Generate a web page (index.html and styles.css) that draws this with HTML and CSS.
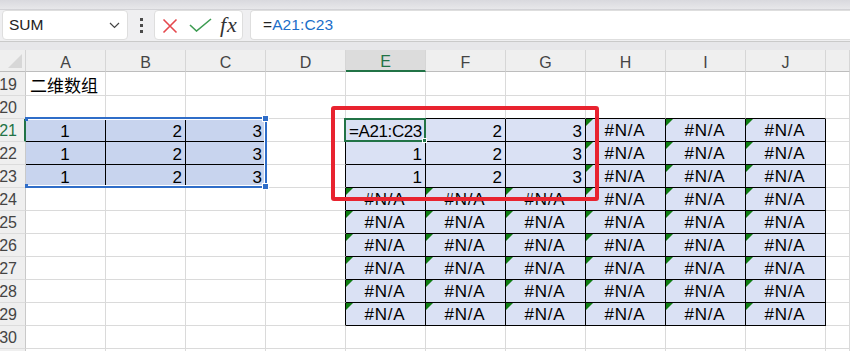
FILE: index.html
```html
<!DOCTYPE html>
<html lang="zh-CN">
<head>
<meta charset="utf-8">
<title>Sheet</title>
<link rel="stylesheet" href="styles.css">
</head>
<body>
<div class="app">
  <div class="topstrip"></div>
  <div class="fbar">
    <div class="namebox">
      <span class="name">SUM</span>
      <svg class="chev" width="11" height="7" viewBox="0 0 11 7"><polyline points="1,1 5.5,5.5 10,1" fill="none" stroke="#444" stroke-width="1.2"/></svg>
    </div>
    <div class="dots"><i></i><i></i><i></i></div>
    <div class="btns">
      <svg class="ico-x" width="16" height="16" viewBox="0 0 16 16"><path d="M1.5 1.5 L14.5 14.5 M14.5 1.5 L1.5 14.5" stroke="#e5484d" stroke-width="1.6" fill="none"/></svg>
      <svg class="ico-ok" width="23" height="14" viewBox="0 0 23 14"><polyline points="1,7 7.5,13 22,1" fill="none" stroke="#3d9c52" stroke-width="1.6"/></svg>
      <span class="fx">fx</span>
    </div>
    <div class="finput"><span class="eq">=</span><span class="ref">A21:C23</span></div>
  </div>
  <div class="gapbar"></div>
  <div class="sheet">
    <!-- header -->
    <div class="corner"><span class="tri"></span></div>
    <div class="ch">A</div><div class="ch">B</div><div class="ch">C</div><div class="ch">D</div>
    <div class="ch act">E</div><div class="ch">F</div><div class="ch">G</div><div class="ch">H</div>
    <div class="ch">I</div><div class="ch">J</div><div class="ch"></div>
    <!-- 19 -->
    <div class="rh">19</div>
    <div class="c l cjk">二维数组</div><div class="c"></div><div class="c"></div><div class="c"></div>
    <div class="c"></div><div class="c"></div><div class="c"></div><div class="c"></div><div class="c"></div><div class="c"></div><div class="c"></div>
    <!-- 20 -->
    <div class="rh">20</div>
    <div class="c"></div><div class="c"></div><div class="c"></div><div class="c"></div>
    <div class="c kb"></div><div class="c kb"></div><div class="c kb"></div><div class="c kb"></div><div class="c kb"></div><div class="c kb"></div><div class="c"></div>
    <!-- 21 -->
    <div class="rh cur">21</div>
    <div class="c s m">1</div><div class="c s r">2</div><div class="c s r">3</div><div class="c kr"></div>
    <div class="c k l f">=A21:C23</div><div class="c k r">2</div><div class="c k r">3</div><div class="c k na">#N/A</div><div class="c k na">#N/A</div><div class="c k na">#N/A</div><div class="c"></div>
    <!-- 22 -->
    <div class="rh">22</div>
    <div class="c s m">1</div><div class="c s r">2</div><div class="c s r">3</div><div class="c kr"></div>
    <div class="c k r">1</div><div class="c k r">2</div><div class="c k r">3</div><div class="c k na">#N/A</div><div class="c k na">#N/A</div><div class="c k na">#N/A</div><div class="c"></div>
    <!-- 23 -->
    <div class="rh">23</div>
    <div class="c s m">1</div><div class="c s r">2</div><div class="c s r">3</div><div class="c kr"></div>
    <div class="c k r">1</div><div class="c k r">2</div><div class="c k r">3</div><div class="c k na">#N/A</div><div class="c k na">#N/A</div><div class="c k na">#N/A</div><div class="c"></div>
    <!-- 24 -->
    <div class="rh">24</div>
    <div class="c"></div><div class="c"></div><div class="c"></div><div class="c kr"></div>
    <div class="c k na">#N/A</div><div class="c k na">#N/A</div><div class="c k na">#N/A</div><div class="c k na">#N/A</div><div class="c k na">#N/A</div><div class="c k na">#N/A</div><div class="c"></div>
    <!-- 25 -->
    <div class="rh">25</div>
    <div class="c"></div><div class="c"></div><div class="c"></div><div class="c kr"></div>
    <div class="c k na">#N/A</div><div class="c k na">#N/A</div><div class="c k na">#N/A</div><div class="c k na">#N/A</div><div class="c k na">#N/A</div><div class="c k na">#N/A</div><div class="c"></div>
    <!-- 26 -->
    <div class="rh">26</div>
    <div class="c"></div><div class="c"></div><div class="c"></div><div class="c kr"></div>
    <div class="c k na">#N/A</div><div class="c k na">#N/A</div><div class="c k na">#N/A</div><div class="c k na">#N/A</div><div class="c k na">#N/A</div><div class="c k na">#N/A</div><div class="c"></div>
    <!-- 27 -->
    <div class="rh">27</div>
    <div class="c"></div><div class="c"></div><div class="c"></div><div class="c kr"></div>
    <div class="c k na">#N/A</div><div class="c k na">#N/A</div><div class="c k na">#N/A</div><div class="c k na">#N/A</div><div class="c k na">#N/A</div><div class="c k na">#N/A</div><div class="c"></div>
    <!-- 28 -->
    <div class="rh">28</div>
    <div class="c"></div><div class="c"></div><div class="c"></div><div class="c kr"></div>
    <div class="c k na">#N/A</div><div class="c k na">#N/A</div><div class="c k na">#N/A</div><div class="c k na">#N/A</div><div class="c k na">#N/A</div><div class="c k na">#N/A</div><div class="c"></div>
    <!-- 29 -->
    <div class="rh">29</div>
    <div class="c"></div><div class="c"></div><div class="c"></div><div class="c kr"></div>
    <div class="c k na">#N/A</div><div class="c k na">#N/A</div><div class="c k na">#N/A</div><div class="c k na">#N/A</div><div class="c k na">#N/A</div><div class="c k na">#N/A</div><div class="c"></div>
    <!-- 30 -->
    <div class="rh">30</div>
    <div class="c"></div><div class="c"></div><div class="c"></div><div class="c"></div>
    <div class="c"></div><div class="c"></div><div class="c"></div><div class="c"></div><div class="c"></div><div class="c"></div><div class="c"></div>
    <!-- 31 (partial) -->
    <div class="rh"></div>
    <div class="c"></div><div class="c"></div><div class="c"></div><div class="c"></div>
    <div class="c"></div><div class="c"></div><div class="c"></div><div class="c"></div><div class="c"></div><div class="c"></div><div class="c"></div>

    <!-- overlays -->
    <div class="selection">
      <span class="hd tl"></span><span class="hd tr"></span><span class="hd bl"></span><span class="hd br"></span>
    </div>
    <div class="active"><span class="fill-handle"></span></div>
    <div class="redbox"></div>
  </div>
</div>
</body>
</html>
```

FILE: styles.css
```css
* { box-sizing: border-box; }
html, body { margin: 0; padding: 0; }
body {
  width: 850px;
  height: 351px;
  overflow: hidden;
  background: #ffffff;
  font-family: "Liberation Sans", Arial, sans-serif;
  color: #000;
}
.app { width: 850px; height: 351px; overflow: hidden; }

.topstrip {
  height: 10px;
  background: linear-gradient(#d9d9de, #e7e7ea);
  border-bottom: 1px solid #d2d2d6;
}
.fbar {
  height: 32px;
  background: #efeff1;
  border-bottom: 1px solid #cacaca;
  display: flex;
  align-items: flex-start;
  padding: 0 0 0 2px;
}
.namebox {
  width: 126px;
  height: 30px;
  background: #fff;
  border: 1px solid #dedede;
  border-radius: 4px;
  display: flex;
  align-items: center;
  padding: 0 0 0 6px;
}
.name { font-size: 15.5px; color: #222; flex: 1; line-height: 1; }
.chev { margin-right: 7px; margin-top: 1px; }
.dots {
  width: 26px;
  height: 30px;
  display: flex;
  flex-direction: column;
  align-items: center;
  justify-content: center;
  gap: 3px;
}
.dots i { display: block; width: 3px; height: 3px; background: #4a4a4a; }
.btns {
  width: 89px;
  height: 30px;
  background: #fff;
  border: 1px solid #dedede;
  border-radius: 4px;
  display: flex;
  align-items: center;
  padding-left: 7px;
}
.ico-x { margin-top: 1px; }
.ico-ok { margin-left: 11px; margin-top: 0; }
.fx {
  font-family: "Liberation Serif", "Times New Roman", serif;
  font-style: italic;
  font-size: 22px;
  color: #333;
  margin-left: 8px;
  margin-top: -1px;
  letter-spacing: 1px;
}
.finput {
  flex: 1;
  height: 30px;
  margin-left: 7px;
  background: #fff;
  border: 1px solid #dedede;
  border-right: none;
  border-radius: 4px 0 0 4px;
  display: flex;
  align-items: center;
  padding-left: 12px;
  font-size: 15.5px;
  letter-spacing: 0.1px;
}
.eq { color: #222; }
.ref { color: #1b6ec9; }
.gapbar { height: 8px; background: #e7e7ea; }

.sheet {
  position: relative;
  display: grid;
  grid-template-columns: 26px repeat(10, 80px) 24px;
  grid-template-rows: 22px 24px repeat(11, 23px) 10px;
}
.corner {
  background: #efefef;
  border-right: 1px solid #d4d4d4;
  border-bottom: 1px solid #bdbdbd;
  position: relative;
}
.tri {
  position: absolute;
  right: 3px;
  bottom: 3px;
  width: 0;
  height: 0;
  border-left: 14px solid transparent;
  border-bottom: 14px solid #d7d7d7;
}
.ch {
  background: #efefef;
  border-right: 1px solid #d6d6d6;
  border-bottom: 1px solid #bdbdbd;
  display: flex;
  align-items: flex-end;
  justify-content: center;
  font-size: 16px;
  line-height: 17px;
  color: #444;
}
.ch.act {
  background: #dcdcdc;
  color: #217346;
  border-bottom: 2px solid #217346;
}
.rh {
  background: #efefef;
  border-right: 1px solid #c9c9c9;
  border-bottom: 1px solid #dcdcdc;
  display: flex;
  align-items: flex-end;
  justify-content: flex-end;
  padding: 0 8px 2px 0;
  font-size: 16px;
  line-height: 16px;
  color: #444;
  overflow: hidden;
}
.rh.cur { color: #217346; border-right: 2px solid #217346; padding-right: 7px; }

.c {
  position: relative;
  border-right: 1px solid #dadada;
  border-bottom: 1px solid #dadada;
  display: flex;
  align-items: flex-end;
  font-size: 17px;
  line-height: 18px;
  padding: 0 3px 0 2px;
  white-space: nowrap;
}
.c.l { justify-content: flex-start; }
.c.r { justify-content: flex-end; }
.c.m { justify-content: center; }
.cjk {
  font-family: "Noto Sans CJK SC", "Liberation Sans", sans-serif;
  padding-left: 4px;
  padding-bottom: 1px;
  overflow: visible;
  z-index: 1;
}
.c.s { background: #c8d4ee; border-color: #000; }
.c.k { background: #dae1f4; border-color: #000; }
.c.kr { border-right-color: #000; }
.c.kb { border-bottom-color: #000; }
.c.f { letter-spacing: -0.4px; padding-left: 3px; }
.c.na {
  justify-content: center;
  letter-spacing: 0.8px;
  padding-bottom: 1px;
}
.c.na::before {
  content: "";
  position: absolute;
  left: 0;
  top: 0;
  width: 0;
  height: 0;
  border-top: 7px solid #0f7d12;
  border-right: 7px solid transparent;
}

.selection {
  position: absolute;
  left: 25px;
  top: 67px;
  width: 242px;
  height: 71px;
  border: 2px solid #2f6dc8;
  border-left: none;
  box-shadow: inset -1px 1px 0 #fff, inset 0 -1px 0 #fff;
  pointer-events: none;
}
.hd { position: absolute; background: #2f6dc8; border: 1px solid #fff; }
.hd.tr { right: -4px; top: -4px; width: 7px; height: 7px; }
.hd.br { right: -4px; bottom: -4px; width: 7px; height: 7px; }
.hd.tl { left: 0; top: -2px; width: 3px; height: 4px; border: none; }
.hd.bl { left: 0; bottom: -2px; width: 3px; height: 4px; border: none; }

.active {
  position: absolute;
  left: 344px;
  top: 68px;
  width: 82px;
  height: 24px;
  border: 2px solid #217346;
  pointer-events: none;
}
.fill-handle {
  position: absolute;
  right: -3px;
  bottom: -3px;
  width: 5px;
  height: 5px;
  background: #217346;
  border: 1px solid #fff;
}
.redbox {
  position: absolute;
  left: 331px;
  top: 56px;
  width: 268px;
  height: 95px;
  border: 4px solid #e8232f;
  border-radius: 3px;
  pointer-events: none;
}
```
